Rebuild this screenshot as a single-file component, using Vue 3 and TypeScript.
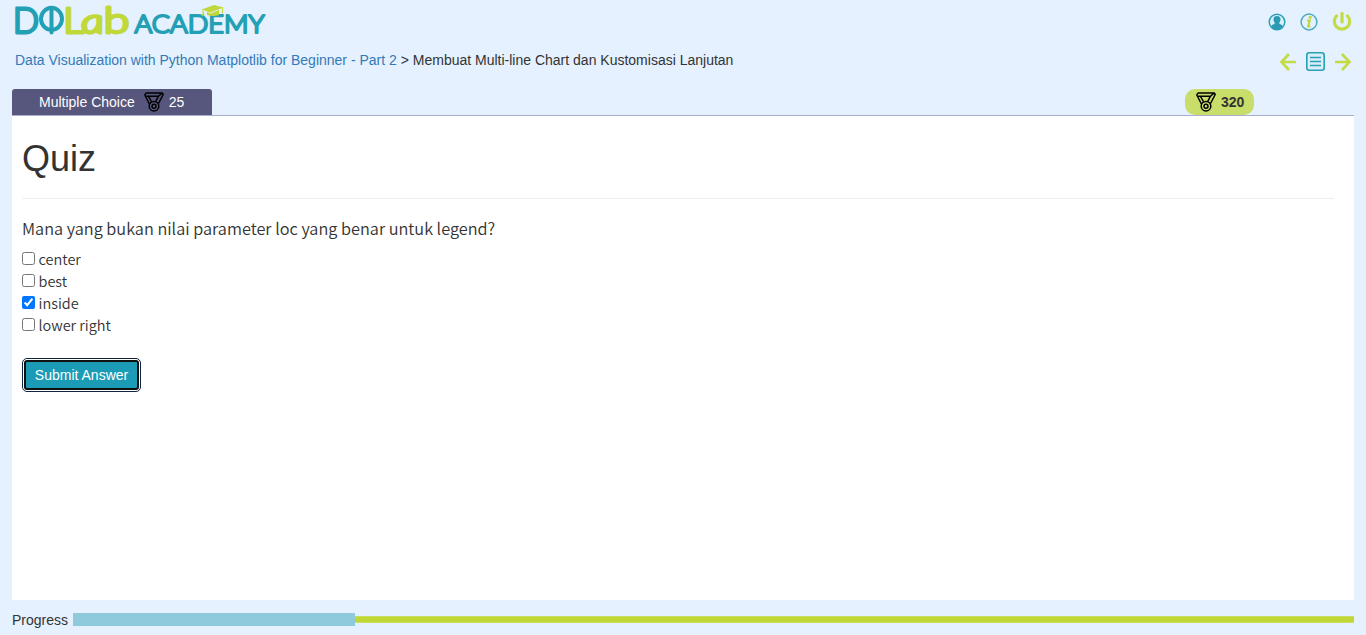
<script setup lang="ts">
import { ref } from 'vue'

interface Choice {
  label: string
}

const choices: Choice[] = [
  { label: 'center' },
  { label: 'best' },
  { label: 'inside' },
  { label: 'lower right' },
]
const selected = ref<string[]>(['inside'])
const progress = ref(22)
</script>

<template>
  <div class="page">
    <header class="topbar">
      <svg class="logo" width="254" height="36" viewBox="0 0 254 36" role="img" aria-label="DQLab Academy">
        <g class="teal big">
          <text x="-2" y="31" textLength="26" lengthAdjust="spacingAndGlyphs">D</text>
        </g>
        <g fill="none" stroke="#24a0b5" stroke-width="4" stroke-linecap="round">
          <ellipse cx="36.500" cy="16.800" rx="10.500" ry="11" />
          <path d="M36.500 7v23.500" />
        </g>
        <g class="lime big">
          <text x="48" y="31" textLength="21" lengthAdjust="spacingAndGlyphs">L</text>
          <text transform="translate(67.500 31) skewX(9)" class="slanted" x="0" y="0" textLength="23" lengthAdjust="spacingAndGlyphs">a</text>
          <text x="88.500" y="31" textLength="26" lengthAdjust="spacingAndGlyphs">b</text>
        </g>
        <g class="teal small">
          <text x="119.500" y="31" textLength="130" lengthAdjust="spacingAndGlyphs">ACADEMY</text>
        </g>
        <g fill="#c0d83a">
          <path d="M186.500 7.500 199 3l9.500 2.500-13 5Z" />
          <path d="M192 9.500v3.500q6 2 12 0V8l-8.500 3.500Z" />
          <path d="M187.500 8v4l-1.500 2 3.500-1-1-4Z" />
          <path d="M207.500 5.500v6" fill="none" stroke="#c0d83a" />
        </g>
      </svg>
      <nav class="account">
        <svg width="18" height="18" viewBox="0 0 18 18"><circle cx="9" cy="9" r="7.800" fill="#d9f0f7" stroke="#2aa0b6" stroke-width="1.500" /><path d="M9 3c2.500 0 3.700 1.600 3.500 3.800-.1 1.400-.8 2.200-1.200 3v1l3.200 1.500v2A7.800 7.800 0 0 1 9 16.700a7.800 7.800 0 0 1-5.500-2.400v-2l3.200-1.500v-1c-.4-.8-1.100-1.600-1.200-3C5.300 4.600 6.500 3 9 3Z" fill="#2a9bb3" /></svg>
        <svg width="18" height="18" viewBox="0 0 18 18"><circle cx="9" cy="9" r="7.900" fill="none" stroke="#4bacc2" stroke-width="1.500" /><circle cx="10.200" cy="4.300" r="1.600" fill="#c0d83a" /><path d="M7 7.500h2.700l-1.500 6h2.300" fill="none" stroke="#c0d83a" stroke-width="2.200" /></svg>
        <svg width="20" height="20" viewBox="0 0 20 20" fill="none" stroke="#c3db45" stroke-width="3.200"><path d="M10 1.500v8.500M4.500 4a7.700 7.700 0 1 0 11 0" stroke-linecap="round" /></svg>
      </nav>
    </header>

    <div class="subbar">
      <div class="crumbs"><a href="#">Data Visualization with Python Matplotlib for Beginner - Part 2</a> &gt; Membuat Multi-line Chart dan Kustomisasi Lanjutan</div>
      <nav class="pager">
        <svg width="18" height="18" viewBox="0 0 18 18" fill="none" stroke="#c3db45" stroke-width="2.700"><path d="M17 9H2.500M10 1 2.500 9l7.500 8" /></svg>
        <svg width="19" height="19" viewBox="0 0 19 19" fill="none" stroke="#2a9fb5"><rect x=".8" y=".8" width="17.400" height="17.400" rx="2.500" stroke-width="1.600" fill="#d8eff8" /><path d="M4 5.500h11M4 9.500h11M4 13.500h11" stroke-width="1.300" /></svg>
        <svg width="18" height="18" viewBox="0 0 18 18" fill="none" stroke="#c3db45" stroke-width="2.700"><path d="M1 9h14.500M8 1l7.500 8L8 17" /></svg>
      </nav>
    </div>

    <div class="tabs">
      <div class="tab">
        <span>Multiple Choice</span>
        <svg class="medal" width="20" height="20" viewBox="0 0 20 20"><use href="#medal-shape" /></svg>
        <span>25</span>
      </div>
      <div class="score">
        <svg class="medal" width="20" height="20" viewBox="0 0 20 20">
          <g id="medal-shape" fill="none" stroke="#000" stroke-width="1.500" stroke-linejoin="round">
            <path d="M2 .9h16.200l1 1.600-4.700 9M2 .9.800 3l4.600 9M1 4.200h13.500l-2.700 5.200M14.500 4.200l3.700-3.300M4.500 4.500l3 5.200" />
            <circle cx="10" cy="14.200" r="4.800" /><circle cx="10" cy="14.200" r="2" />
          </g>
        </svg>
        <span>320</span>
      </div>
    </div>

    <main class="panel">
      <h1>Quiz</h1>
      <hr />
      <p class="question">Mana yang bukan nilai parameter loc yang benar untuk legend?</p>
      <label v-for="choice in choices" :key="choice.label" class="choice">
        <input v-model="selected" type="checkbox" :value="choice.label" />
        <span>{{ choice.label }}</span>
      </label>
      <button class="submit" type="button">Submit Answer</button>
    </main>

    <footer class="footer">
      <span>Progress</span>
      <div class="track"><div class="done" :style="{ width: progress + '%' }"></div><div class="rest"></div></div>
    </footer>
  </div>
</template>

<style>
body { background: #e5f1ff; }
</style>

<style scoped>
* { box-sizing: border-box; }
.page { height: 635px; padding: 0 12px; display: flex; flex-direction: column; background: #e5f1ff; color: #333; font: 14px/20px "Liberation Sans", Arial, sans-serif; }
.topbar { height: 44px; display: flex; justify-content: space-between; padding: 2px 2px 0 3px; }
.logo { display: block; overflow: visible; }
.logo text { font-family: Lato, sans-serif; font-weight: 300; stroke-linejoin: round; }
.teal { fill: #24a0b5; stroke: #24a0b5; }
.lime { fill: #c0d83a; stroke: #c0d83a; }
.big { font-size: 34.5px; stroke-width: 2.8; }
.small { font-size: 25px; stroke-width: 2.2; }
.slanted { font-style: italic; }
.account { display: flex; align-items: center; gap: 14px; height: 39px; }
.pager { display: flex; align-items: center; gap: 9px; height: 35px; }
.subbar { height: 45px; display: flex; justify-content: space-between; padding: 0 2px 0 3px; }
.crumbs { padding-top: 6px; }
.crumbs a { color: #337ab7; text-decoration: none; }
.tabs { height: 27px; flex: none; display: flex; justify-content: space-between; border-bottom: 1px solid #a9aecb; }
.tab { width: 200px; height: 26px; padding-left: 27px; display: flex; align-items: center; background: #57567c; color: #fff; border-radius: 3px 3px 0 0; }
.tab .medal { margin: 0 5px 0 9px; }
.score { width: 69px; height: 26px; margin-right: 100px; padding-left: 11px; display: flex; align-items: center; gap: 5px; background: #c9dd6b; border-radius: 10px; font-weight: bold; }
.panel { height: 484px; flex: none; padding: 23px 20px 0 10px; background: #fff; font-family: "Noto Sans CJK SC", sans-serif; }
h1 { margin: 0; height: 40px; font: 36px/40px "Liberation Sans", Arial, sans-serif; }
hr { margin: 19px 0 0; border: 0; height: 1px; background: #eee; }
.question { margin: 17px 0 8px; font-size: 16.3px; line-height: 24px; font-weight: 350; }
.choice { display: flex; align-items: center; height: 22px; font-size: 14.5px; line-height: 22px; font-weight: 350; }
.choice input { width: 13px; height: 13px; margin: 0 3.5px 2px 0; }
.submit { display: block; width: 115px; height: 30px; margin: 24px 0 0 2px; padding: 0; background: #1b9bb5; color: #fff; border: 2px solid #101010; border-radius: 3px; outline: 1px solid #10243b; outline-offset: 1px; font: 14px/20px "Liberation Sans", Arial, sans-serif; }
.footer { display: flex; align-items: center; height: 35px; padding-top: 4px; }
.track { flex: 1; margin-left: 5px; display: flex; align-items: center; }
.done { height: 13px; background: #8ecadc; }
.rest { flex: 1; height: 7px; background: #c0d837; border: solid #cadf5f; border-width: 1px 0; }
</style>
